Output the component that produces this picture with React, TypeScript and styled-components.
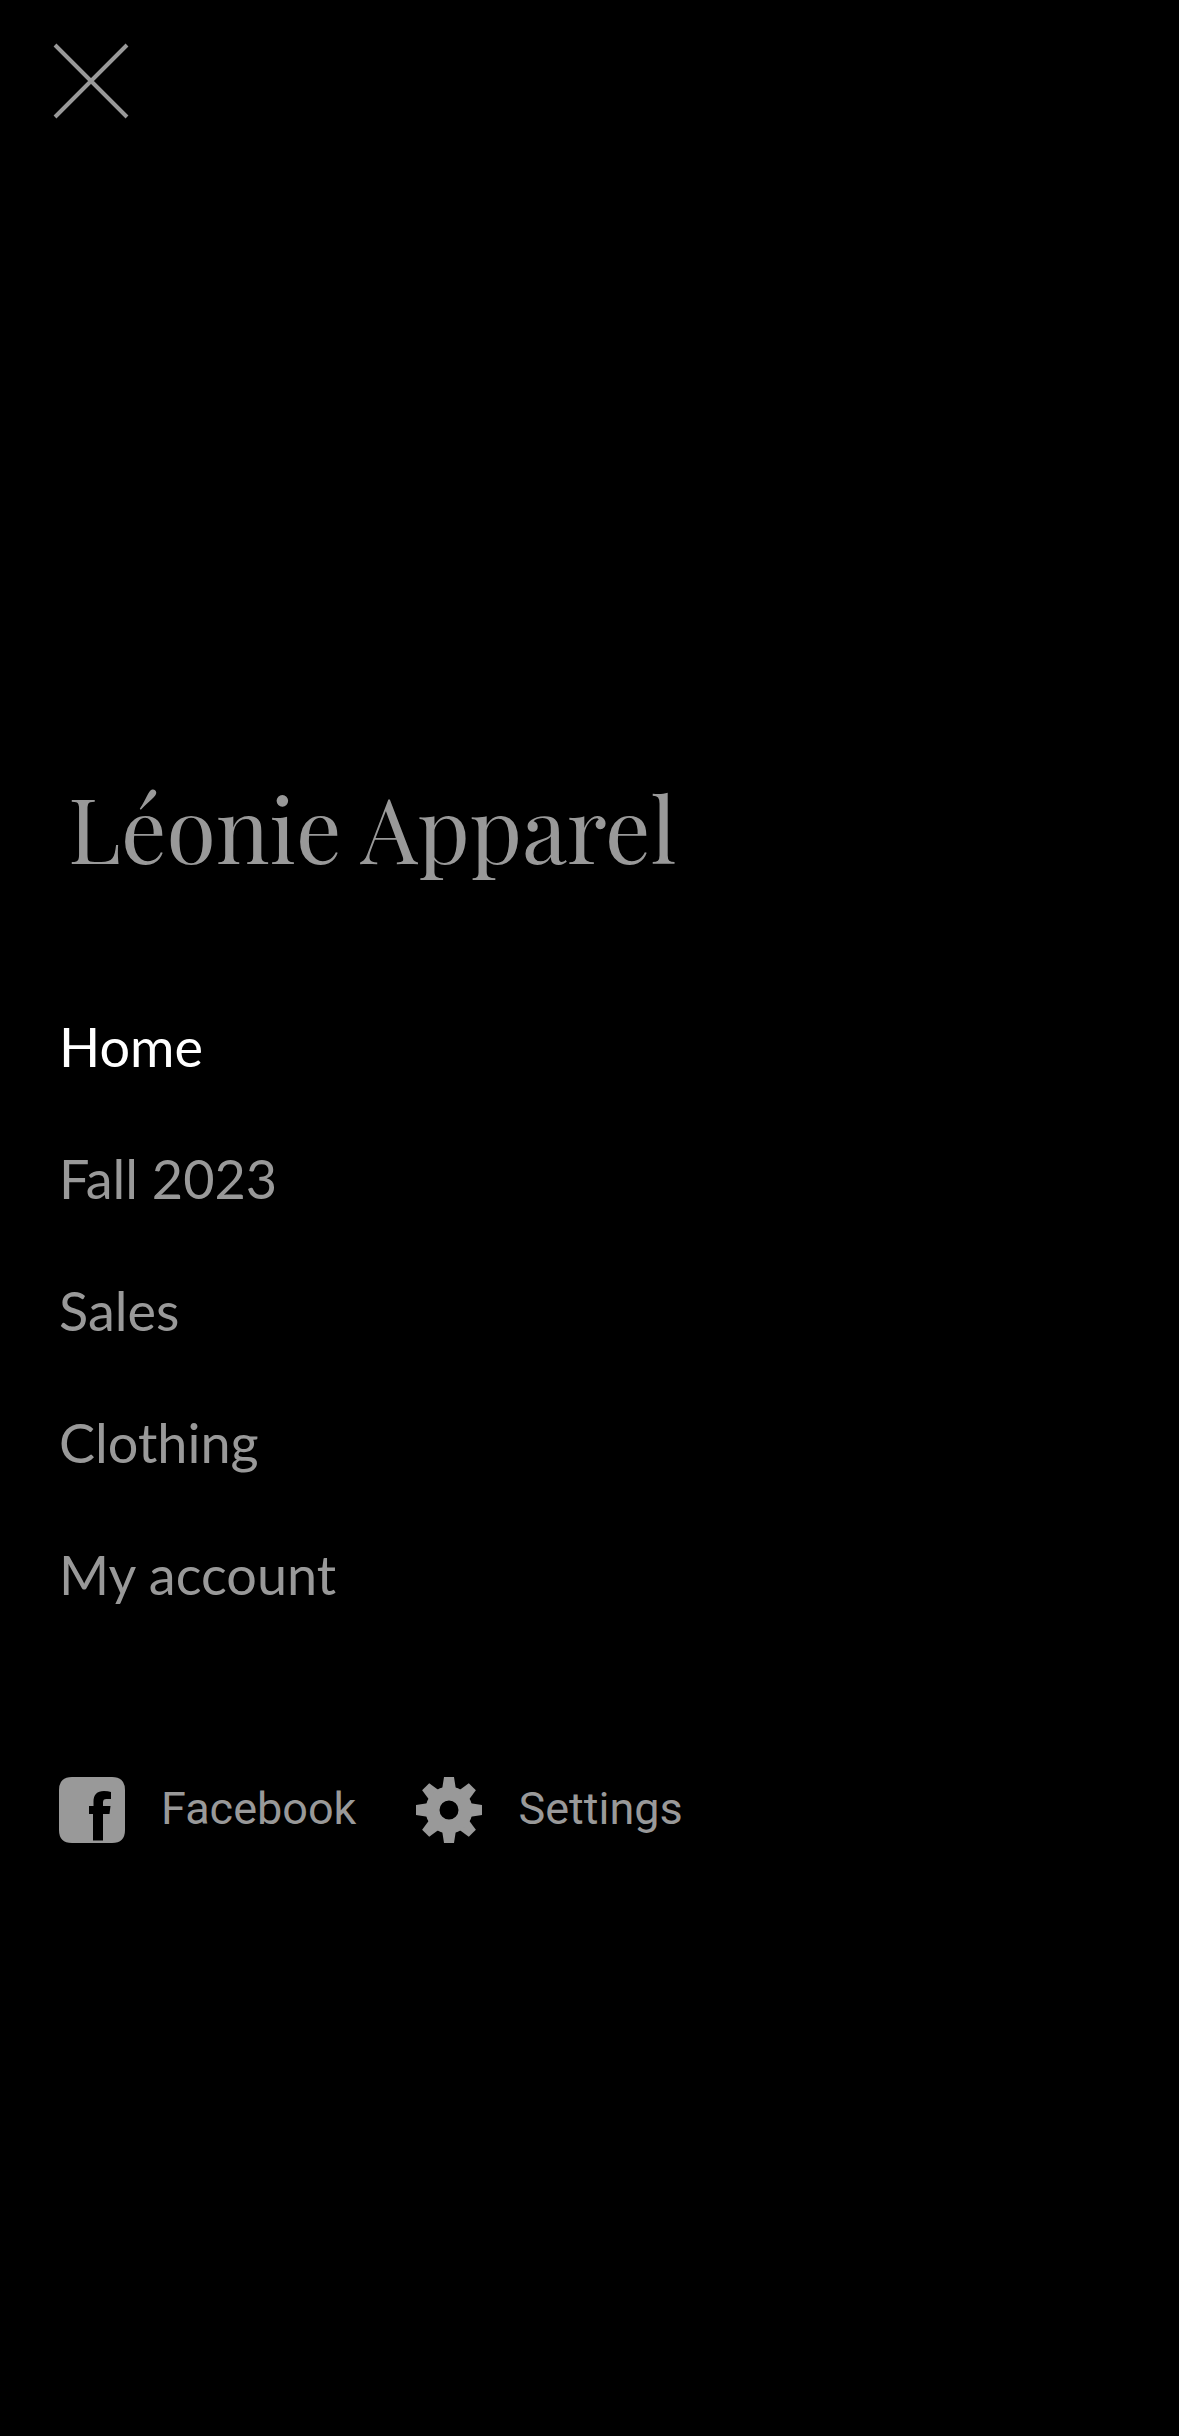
import React from "react";
import styled, { createGlobalStyle } from "styled-components";

const GlobalStyle = createGlobalStyle`
  body {
    margin: 0;
    background: #000;
    color: #999;
  }
`;

const Menu = styled.div`
  display: flex;
  flex-direction: column;
  box-sizing: border-box;
  min-height: 100vh;
  padding: 36px 48px;
  background: #000;
`;

const CloseButton = styled.button`
  display: flex;
  align-self: flex-start;
  padding: 0;
  border: 0;
  background: none;
  color: inherit;
  cursor: pointer;
`;

const Content = styled.main`
  display: flex;
  flex-direction: column;
  padding: 641px 11px 0;
`;

const Title = styled.h1`
  margin: 0 0 94px;
  padding: 0 9px;
  font: 400 90px/120px "Playfair Display", "Liberation Serif", serif;
`;

const NavList = styled.ul`
  display: flex;
  flex-direction: column;
  margin: 0;
  padding: 0;
  list-style: none;
`;

const NavLink = styled.a<{ $active?: boolean }>`
  display: block;
  font: 400 54px/132px Lato, sans-serif;
  color: ${(p) => (p.$active ? "#fff" : "#999")};
  text-decoration: none;
`;

const Shortcuts = styled.footer`
  display: flex;
  flex-wrap: wrap;
  gap: 60px;
  margin-top: 136px;
`;

const Shortcut = styled.a`
  display: flex;
  align-items: flex-start;
  gap: 36px;
  font: 400 45px/64px Roboto, sans-serif;
  color: #999;
  text-decoration: none;
`;

const CloseIcon = () => (
  <svg width="84" height="90" viewBox="0 0 84 90" fill="none" aria-hidden="true">
    <path d="M7 9 79 81M79 9 7 81" stroke="currentColor" strokeWidth="4" />
  </svg>
);

const FacebookIcon = () => (
  <svg width="66" height="66" viewBox="0 0 66 66" fill="currentColor" aria-hidden="true">
    <path
      fillRule="evenodd"
      d="M13 0H53Q66 0 66 13V53Q66 66 53 66H13Q0 66 0 53V13Q0 0 13 0ZM34 63.500H44V37H50.500L51.500 29H44V25.500C44 23 45 22 47.500 22H52V15Q49 14 45 14C38 14 34.500 18 34.500 24.500V29H30V37H34Z"
    />
  </svg>
);

const GearIcon = () => (
  <svg width="66" height="66" viewBox="-33 -33 66 66" aria-hidden="true">
    <g fill="currentColor">
      {[0, 45, 90, 135, 180, 225, 270, 315].map((angle) => (
        <path key={angle} transform={`rotate(${angle})`} d="M-5-33H5L7-20H-7Z" />
      ))}
    </g>
    <circle r="16.500" fill="none" stroke="currentColor" strokeWidth="14" />
  </svg>
);

const pages = ["Home", "Fall 2023", "Sales", "Clothing", "My account"];

export default function App() {
  return (
    <>
      <GlobalStyle />
      <Menu>
        <CloseButton type="button" aria-label="Close menu">
          <CloseIcon />
        </CloseButton>
        <Content>
          <Title>Léonie Apparel</Title>
          <nav>
            <NavList>
              {pages.map((page, i) => (
                <li key={page}>
                  <NavLink href="#" $active={i === 0} aria-current={i === 0 ? "page" : undefined}>
                    {page}
                  </NavLink>
                </li>
              ))}
            </NavList>
          </nav>
          <Shortcuts>
            <Shortcut href="#">
              <FacebookIcon />
              Facebook
            </Shortcut>
            <Shortcut href="#">
              <GearIcon />
              Settings
            </Shortcut>
          </Shortcuts>
        </Content>
      </Menu>
    </>
  );
}
